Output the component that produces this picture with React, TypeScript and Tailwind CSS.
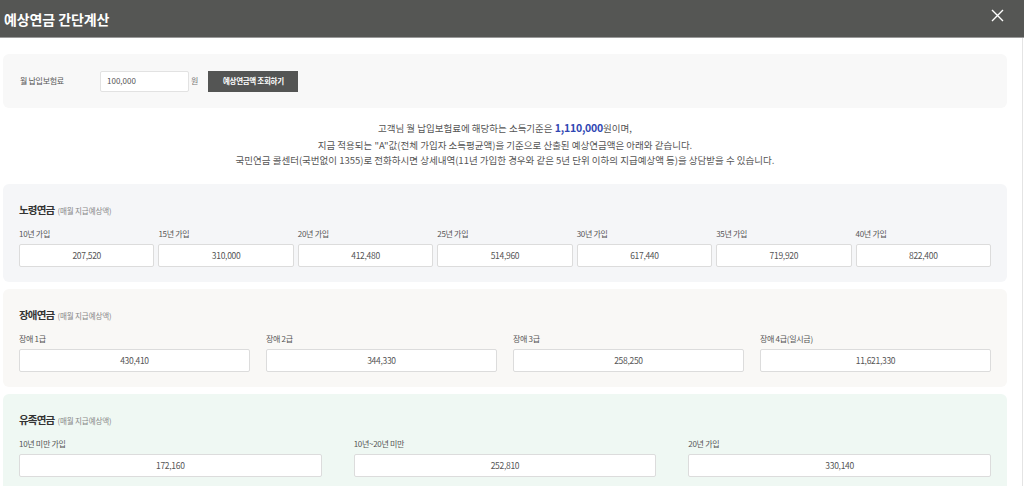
import React from "react";

const F = '"Noto Sans CJK KR", "Noto Sans", sans-serif';

function Box({ label, value }: { label: string; value: string }) {
  return (
    <div className="flex flex-col min-w-0">
      <div className="h-[12px] leading-[12px] text-[8px] text-[#555] tracking-[-0.3px]">{label}</div>
      <div className="mt-[4px] h-[23px] bg-white border border-[#dcdcdc] rounded-[2px] flex items-center justify-center text-[8.5px] text-[#555] tracking-[-0.3px]">
        {value}
      </div>
    </div>
  );
}

function Card({
  title,
  bg,
  cols,
  items,
}: {
  title: string;
  bg: string;
  cols: string;
  items: [string, string][];
}) {
  return (
    <div className={`${bg} shrink-0 rounded-[6px] px-[16px] pt-[19px] pb-[15px]`}>
      <div className="h-[14px] flex items-center">
        <span className="text-[10.5px] font-bold text-[#333] tracking-[-0.8px]">{title}</span>
        <span className="ml-[3px] text-[7.5px] text-[#888] tracking-[-0.1px] mt-[1px]">(매월 지급예상액)</span>
      </div>
      <div className={`mt-[11px] grid ${cols}`}>
        {items.map(([l, v]) => (
          <Box key={l} label={l} value={v} />
        ))}
      </div>
    </div>
  );
}

export default function App() {
  return (
    <div className="w-[1024px] h-[486px] overflow-hidden bg-white flex flex-col" style={{ fontFamily: F }}>
      <div className="h-[38px] shrink-0 bg-[#555654] border-b border-[#9a9a9a] flex items-center justify-between pl-[4px] pr-[20px]">
        <div className="text-white text-[14px] font-bold tracking-[-0.1px] leading-none">예상연금 간단계산</div>
        <svg width="13" height="13" viewBox="0 0 13 13" className="mt-[-6px]">
          <path d="M1 1 L12 12 M12 1 L1 12" stroke="#ffffff" strokeWidth="1.4" />
        </svg>
      </div>
      <div className="flex flex-1 min-h-0">
        <div className="flex-1 pl-[3px] pr-[15px] pt-[16px] flex flex-col">
          <div className="h-[54px] shrink-0 bg-[#f8f8f8] rounded-[6px] flex items-center pl-[17px]">
            <div className="w-[80px] text-[8px] text-[#555] tracking-[-0.3px]">월 납입보험료</div>
            <div className="w-[89px] h-[21px] bg-white border border-[#e2e2e2] rounded-[2px] flex items-center pl-[6px] text-[8px] text-[#555]">
              100,000
            </div>
            <div className="ml-[2px] text-[8px] text-[#777]">원</div>
            <div className="ml-[10px] w-[90px] h-[21px] bg-[#545554] flex items-center justify-center text-white text-[7.5px] font-bold tracking-[-0.3px]">
              예상연금액 조회하기
            </div>
          </div>
          <div className="shrink-0 mt-[11px] mb-[16px] flex flex-col items-center text-[9.5px] text-[#555] tracking-[0px]">
            <div className="h-[18px] flex items-center">
              고객님 월 납입보험료에 해당하는 소득기준은&nbsp;
              <span className="text-[10.5px] font-bold text-[#2f47b3] tracking-[-0.2px]">1,110,000</span>
              원이며,
            </div>
            <div className="h-[16px] flex items-center">
              지금 적용되는 "A"값(전체 가입자 소득평균액)을 기준으로 산출된 예상연금액은 아래와 같습니다.
            </div>
            <div className="h-[15px] flex items-center">
              국민연금 콜센터(국번없이 1355)로 전화하시면 상세내역(11년 가입한 경우와 같은 5년 단위 이하의 지급예상액 등)을 상담받을 수 있습니다.
            </div>
          </div>
          <div className="shrink-0 flex flex-col gap-[7px]">
            <Card
              title="노령연금"
              bg="bg-[#f5f6f8]"
              cols="grid-cols-7 gap-[4px]"
              items={[
                ["10년 가입", "207,520"],
                ["15년 가입", "310,000"],
                ["20년 가입", "412,480"],
                ["25년 가입", "514,960"],
                ["30년 가입", "617,440"],
                ["35년 가입", "719,920"],
                ["40년 가입", "822,400"],
              ]}
            />
            <Card
              title="장애연금"
              bg="bg-[#f9f8f6]"
              cols="grid-cols-4 gap-[16px]"
              items={[
                ["장애 1급", "430,410"],
                ["장애 2급", "344,330"],
                ["장애 3급", "258,250"],
                ["장애 4급(일시금)", "11,621,330"],
              ]}
            />
            <Card
              title="유족연금"
              bg="bg-[#eff8f3]"
              cols="grid-cols-3 gap-[32px]"
              items={[
                ["10년 미만 가입", "172,160"],
                ["10년~20년 미만", "252,810"],
                ["20년 가입", "330,140"],
              ]}
            />
          </div>
        </div>
        <div className="w-[2px] border-l border-[#e4e4e4]" />
      </div>
    </div>
  );
}
